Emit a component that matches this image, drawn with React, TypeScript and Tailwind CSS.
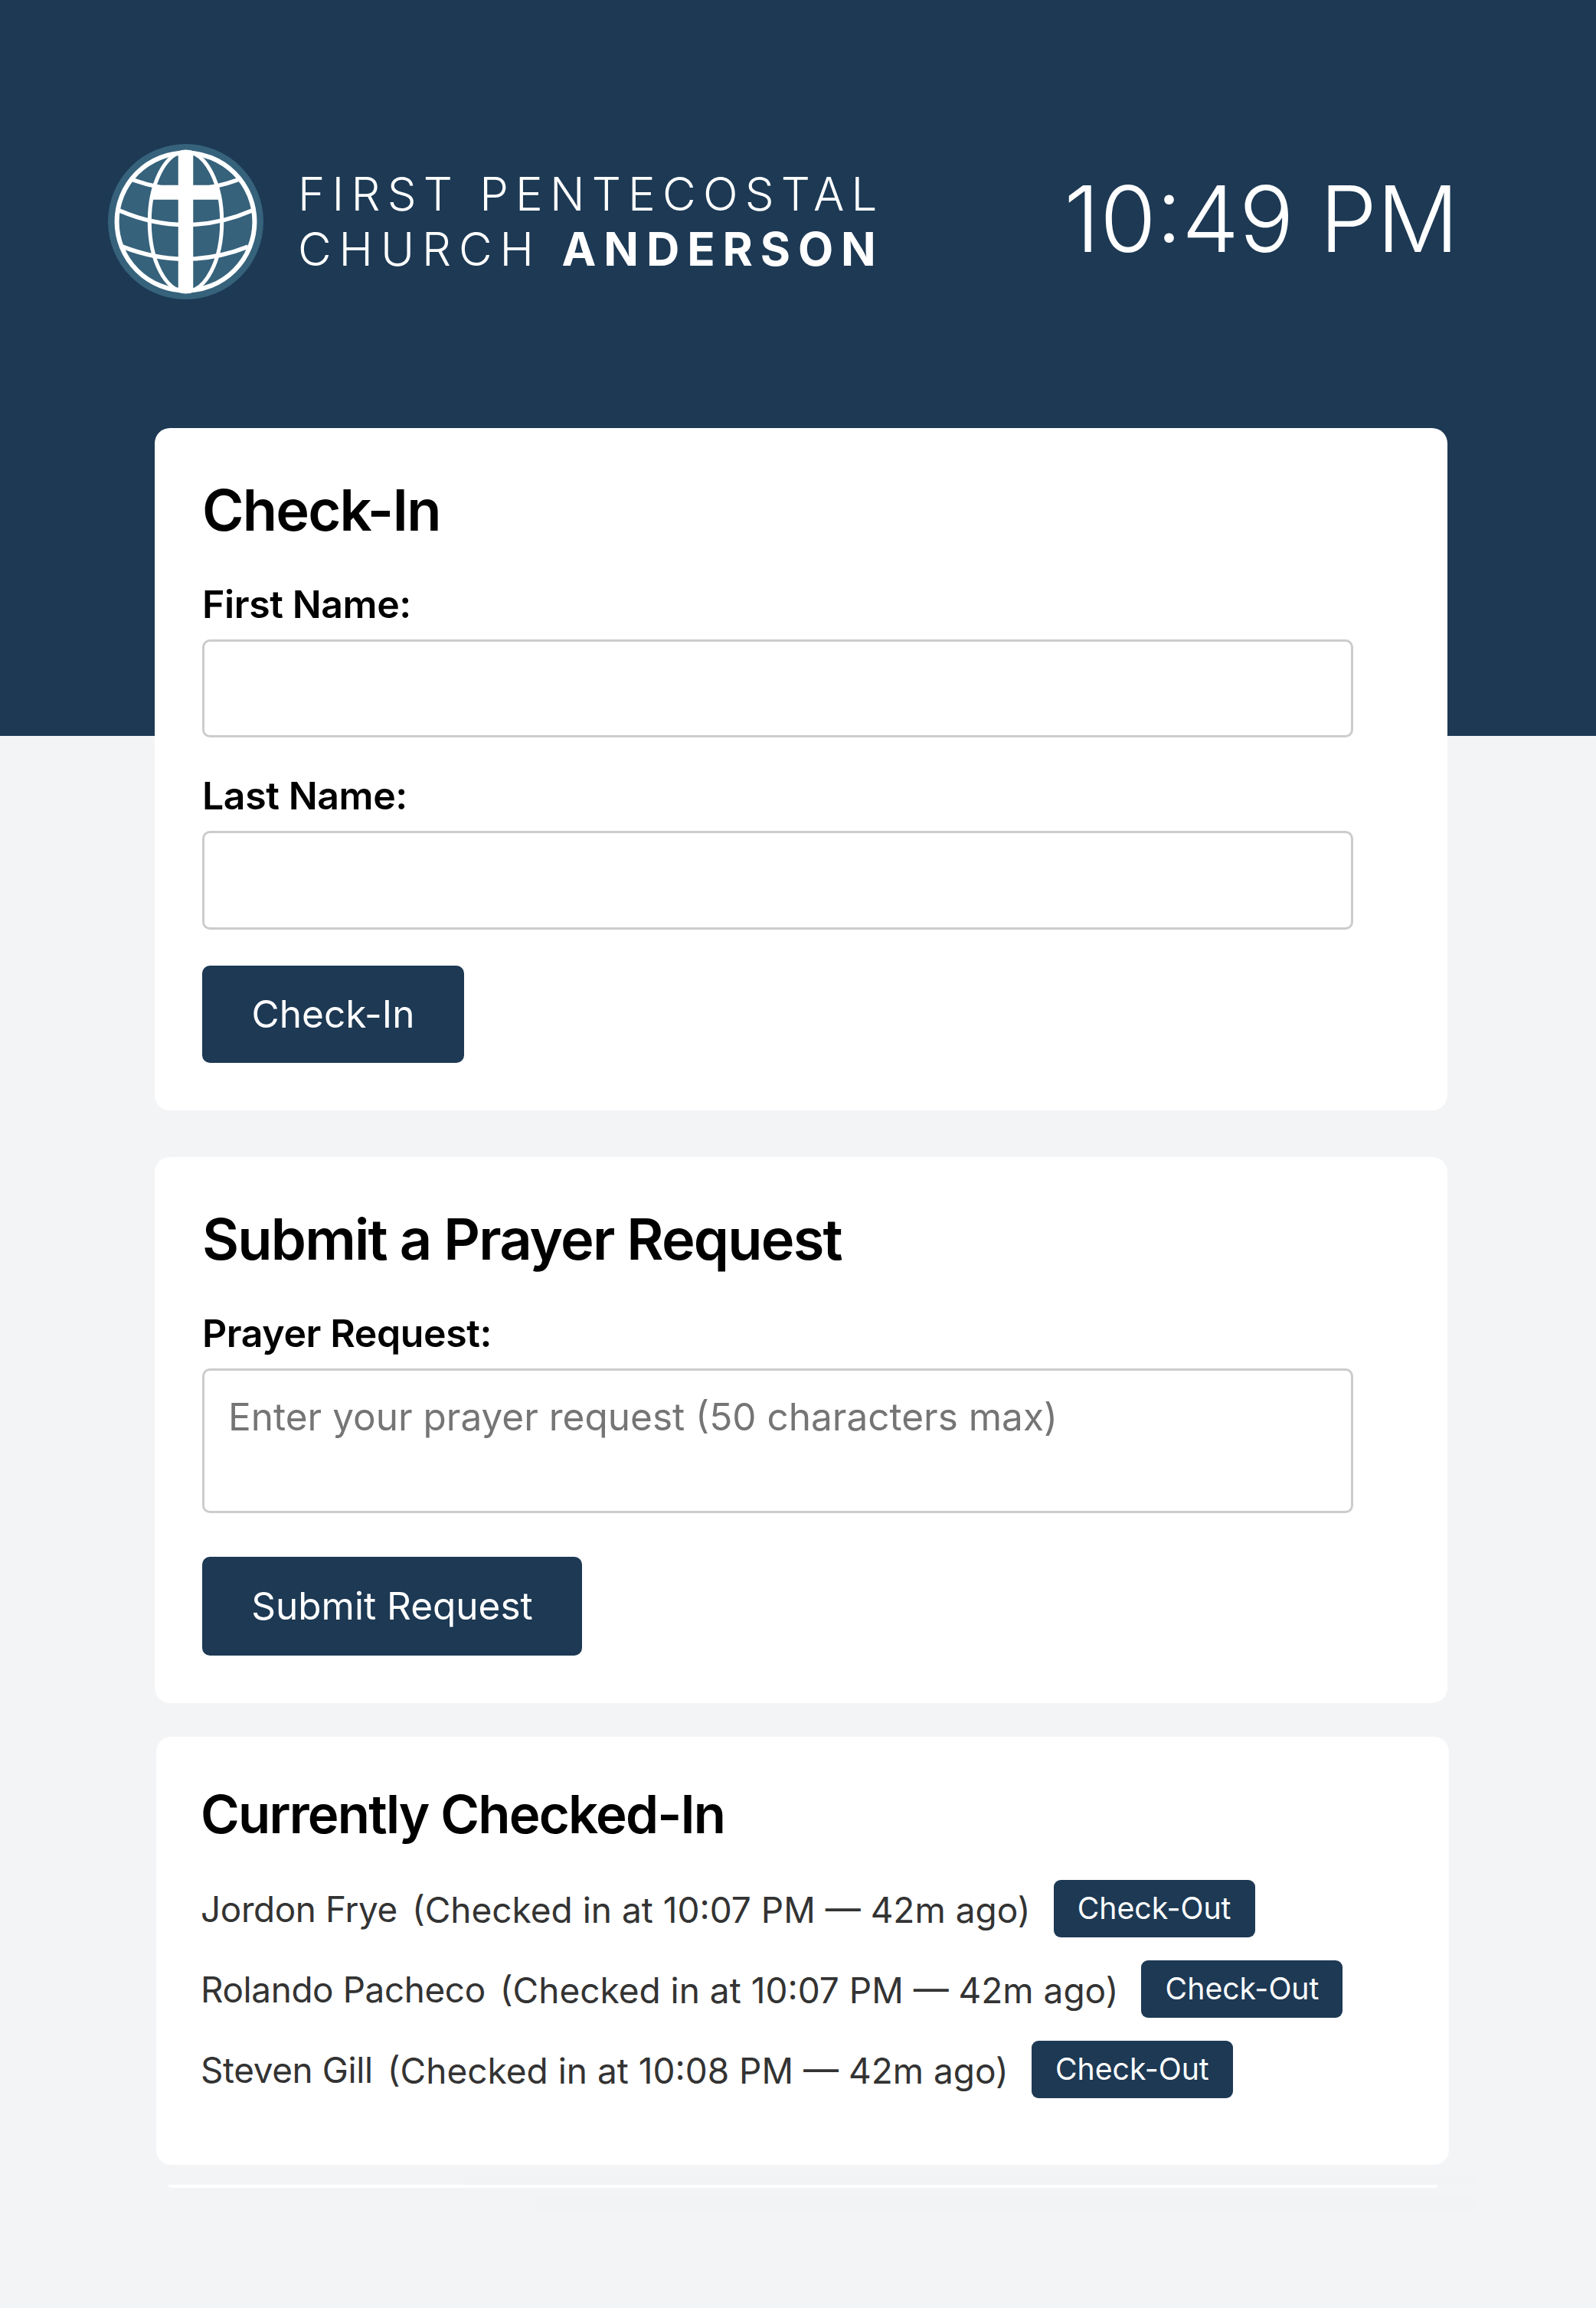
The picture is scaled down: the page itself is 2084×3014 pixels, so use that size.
const rows = [
  { name: "Jordon Frye", at: "10:07" },
  { name: "Rolando Pacheco", at: "10:07" },
  { name: "Steven Gill", at: "10:08" },
];

function Logo() {
  return (
    <svg viewBox="21 28.5 202 202" className="w-[203px] h-[203px] shrink-0">
      <circle cx="122" cy="129.5" r="101" fill="#36627b" />
      <g fill="none" stroke="#fff" strokeWidth="5.5">
        <circle cx="122" cy="129.5" r="89.5" strokeWidth="6" />
        <ellipse cx="122" cy="129.5" rx="47" ry="91" strokeWidth="5" />
        <path d="M53 75Q122 100 190 75" />
        <path d="M36 115Q122 152 208 115" />
        <path d="M40 162Q122 194 203 162" />
      </g>
      <path d="M112.3 38H131.7V82H161L167 101H131.7V220H112.3V101H77L83 82H112.3Z" fill="#fff" />
    </svg>
  );
}

function Label({ text, top }: { text: string; top: string }) {
  return <label className={`block font-semibold text-[50px] leading-[63px] tracking-[-0.4px] text-black ${top}`}>{text}</label>;
}

export default function App() {
  return (
    <div className="min-h-[3014px] bg-[#f3f4f6] font-['Inter',sans-serif] overflow-hidden">
      <header className="h-[961px] bg-[#1d3954] pt-[188px] pl-[141px] pr-[179px] flex items-start justify-between">
        <div className="flex items-start gap-[45px]">
          <Logo />
          <div className="mt-[29px] text-white text-[60px] leading-[72px] font-light tracking-[9.2px] whitespace-nowrap">
            <div>FIRST PENTECOSTAL</div>
            <div className="tracking-[9.9px]">
              CHURCH <span className="font-bold">ANDERSON</span>
            </div>
          </div>
        </div>
        <div className="mt-[23px] text-white text-[119px] leading-[150px] font-light whitespace-nowrap">10:49 PM</div>
      </header>

      <main className="-mt-[402px] flex flex-col">
        <section className="ml-[202px] w-[1688px] h-[891px] bg-white rounded-[20px] pt-[61px] pl-[62px]">
          <h2 className="font-semibold text-[74px] leading-[92px] tracking-[-1.8px] text-black">Check-In</h2>
          <Label text="First Name:" top="mt-[46px]" />
          <div className="mt-[14px] w-[1503px] h-[128px] border-[3px] border-[#ccc] rounded-[10px] bg-white" />
          <Label text="Last Name:" top="mt-[45px]" />
          <div className="mt-[14px] w-[1503px] h-[129px] border-[3px] border-[#ccc] rounded-[10px] bg-white" />
          <button className="mt-[47px] w-[342px] h-[127px] rounded-[10px] bg-[#1d3954] text-white text-[49.5px] font-normal">Check-In</button>
        </section>

        <section className="mt-[61px] ml-[202px] w-[1688px] h-[713px] bg-white rounded-[20px] pt-[61px] pl-[62px]">
          <h2 className="font-semibold text-[74px] leading-[92px] tracking-[-1.8px] text-black">Submit a Prayer Request</h2>
          <Label text="Prayer Request:" top="mt-[46px]" />
          <div className="mt-[14px] w-[1503px] h-[189px] border-[3px] border-[#ccc] rounded-[10px] bg-white pl-[31px] pt-[29px] text-[49.5px] leading-[63px] text-[#757575]">
            Enter your prayer request (50 characters max)
          </div>
          <button className="mt-[57px] w-[496px] h-[129px] rounded-[10px] bg-[#1d3954] text-white text-[49.5px] font-normal">Submit Request</button>
        </section>

        <section className="mt-[44px] ml-[204px] w-[1688px] h-[559px] bg-white rounded-[20px] pt-[58px] pl-[58px]">
          <h2 className="font-semibold text-[69px] leading-[87px] tracking-[-1.8px] text-black">Currently Checked-In</h2>
          <ul className="mt-[42px] flex flex-col gap-[30px]">
            {rows.map((r) => (
              <li key={r.name} className="flex items-center h-[75px] text-[#333] whitespace-nowrap">
                <span className="pt-[3px] text-[45.8px] tracking-[-0.35px]">{r.name}</span>
                <span className="pt-[3px] ml-[19px] text-[46px]">(Checked in at {r.at} PM — 42m ago)</span>
                <button className="ml-[30px] h-[75px] w-[263px] rounded-[9px] bg-[#1d3954] text-white text-[39.2px]">Check-Out</button>
              </li>
            ))}
          </ul>
        </section>

        <div className="mt-[13px] ml-[605px] w-[1320px] h-[13px] bg-[#f2f3f5]" />
        <div className="ml-[220px] w-[1657px] h-[4px] bg-white rounded-b-[4px]" />
        <div className="mt-[13px] ml-[700px] w-[1225px] h-[20px] bg-[#f2f3f5]" />
      </main>
    </div>
  );
}
